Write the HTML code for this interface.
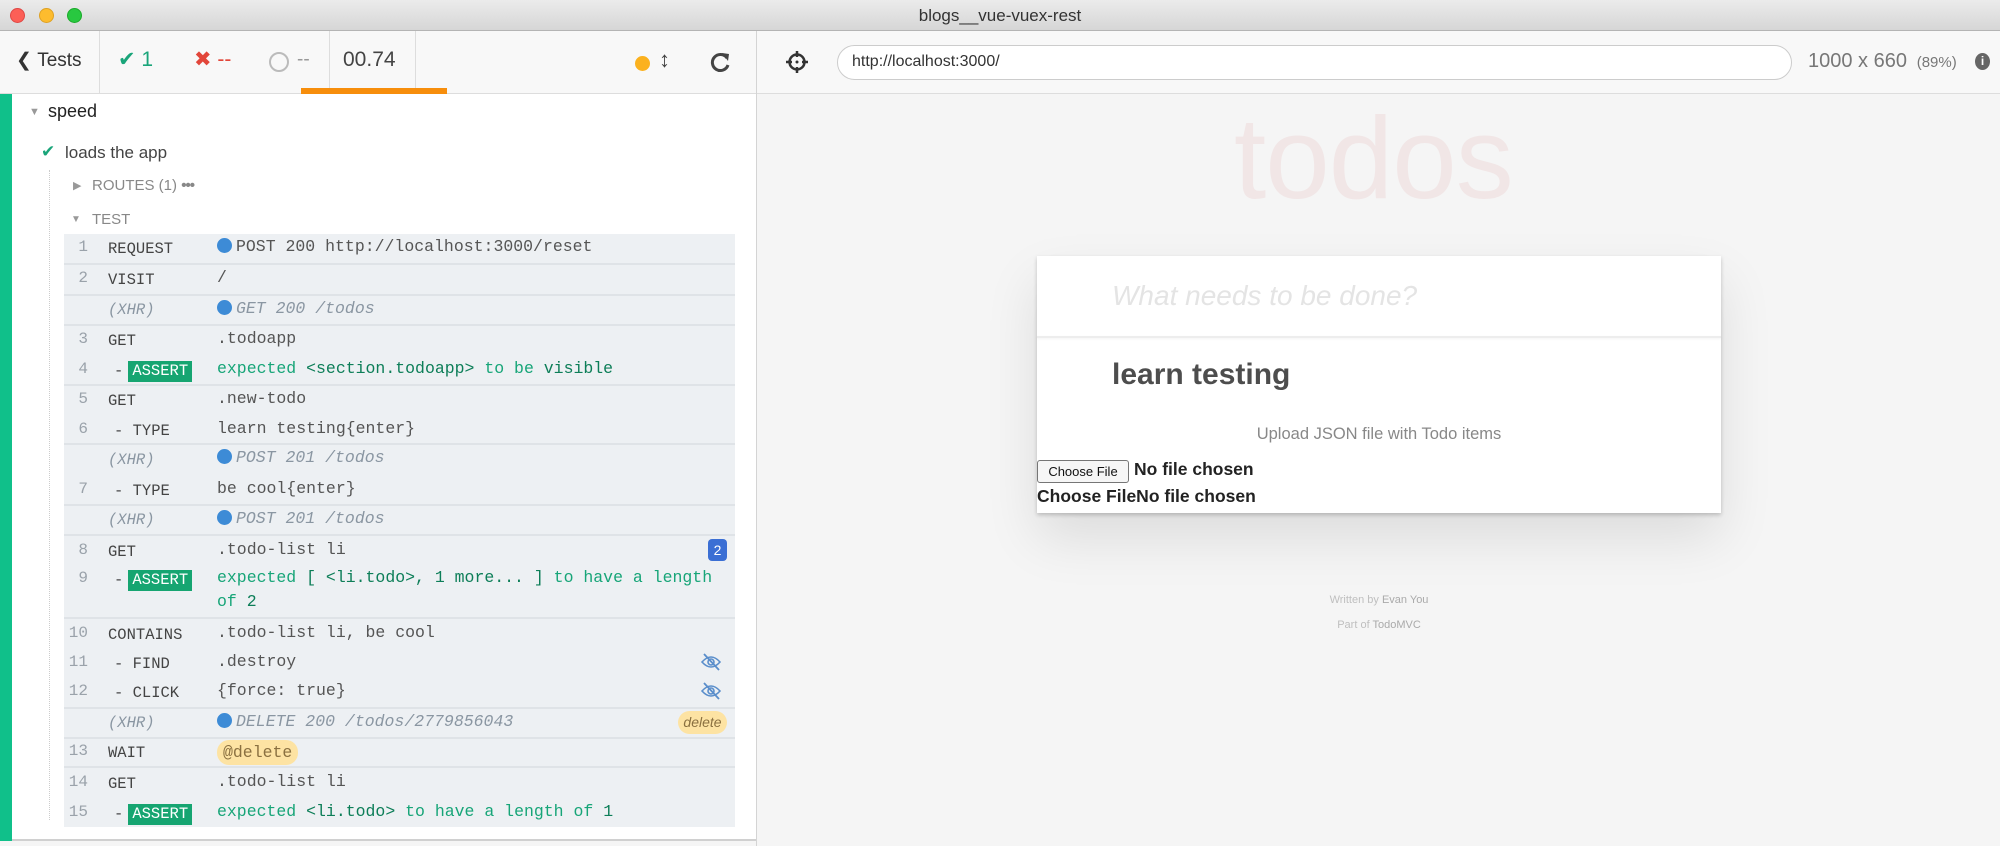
<!DOCTYPE html>
<html><head><meta charset="utf-8">
<style>
*{box-sizing:border-box;margin:0;padding:0}
body{width:2000px;height:846px;overflow:hidden;background:#f5f5f5;font-family:"Liberation Sans",sans-serif;position:relative}
.a{position:absolute;white-space:nowrap}
.title{left:0;top:0;width:2000px;height:31px;background:linear-gradient(#ebebeb,#d6d6d6);border-bottom:1px solid #b4b4b4;text-align:center;font-size:17px;line-height:31px;color:#333}
.dot{width:15px;height:15px;border-radius:50%;top:8px}
.tb{top:31px;height:63px;background:#f8f8f8;border-bottom:1px solid #ddd}
.sep{width:1px;background:#ddd;top:31px;height:63px}
.left{left:0;top:94px;width:756px;height:747px;background:#fff;border-bottom:2px solid #d0d0d0}
.log{left:64px;top:234px;width:671px;height:593px;background:#edf0f3}
.hl{left:64px;width:671px;height:2px;background:#dfe3e7}
.n{width:30px;text-align:right;left:58px;font-family:"Liberation Mono",monospace;font-size:16px;color:#9aa2aa;line-height:30px}
.c{left:108px;font-family:"Liberation Mono",monospace;font-size:15.5px;color:#444;line-height:30px}
.m{left:217px;font-family:"Liberation Mono",monospace;font-size:16.5px;color:#555;line-height:30px}
.x{color:#8a96a2;font-style:italic}
.g{color:#17a578}
.gb{color:#0d7e58}
.bd{display:inline-block;width:15px;height:15px;border-radius:50%;background:#3d8bd6;vertical-align:-2px;margin-right:4px}
.as{display:inline-block;background:#16a571;color:#fff;padding:0 4px;line-height:21px;margin-left:5px}
</style></head><body>
<div class="a title">blogs__vue-vuex-rest</div>
<div class="a dot" style="left:10px;background:#fc5f57;border:1px solid #df4744"></div>
<div class="a dot" style="left:39px;background:#fdbc2e;border:1px solid #dea123"></div>
<div class="a dot" style="left:67px;background:#28c840;border:1px solid #1aab29"></div>

<div class="a tb" style="left:0;width:756px"></div>
<div class="a tb" style="left:757px;width:1243px"></div>
<div class="a" style="left:756px;top:31px;width:1px;height:815px;background:#d4d4d4"></div>
<div class="a sep" style="left:99px"></div>
<div class="a sep" style="left:329px"></div>
<div class="a sep" style="left:415px"></div>
<div class="a" style="left:16px;top:49px;font-size:19px;color:#333">&#10094;&nbsp;Tests</div>
<div class="a" style="left:118px;top:47px;font-size:21px;color:#1aa57a">&#10004;&nbsp;1</div>
<div class="a" style="left:194px;top:47px;font-size:21px;color:#e2463a">&#10006;&nbsp;--</div>
<div class="a" style="left:269px;top:52px;width:20px;height:20px;border:2.5px solid #bbb;border-radius:50%"></div>
<div class="a" style="left:297px;top:49px;font-size:19px;color:#999">--</div>
<div class="a" style="left:343px;top:48px;font-size:21px;color:#444">00.74</div>
<div class="a" style="left:301px;top:88px;width:146px;height:7px;background:#f78e0c"></div>
<div class="a" style="left:635px;top:56px;width:15px;height:15px;border-radius:50%;background:#fbb11e"></div>
<div class="a" style="left:659px;top:47px;font-size:22px;color:#444;font-weight:bold">&#8597;</div>
<svg class="a" style="left:710px;top:51px" width="22" height="22" viewBox="0 0 22 22"><path d="M17 7 A8 8 0 1 0 18 14" fill="none" stroke="#444" stroke-width="3"/><path d="M12 2 L19 3 L18 10 Z" fill="#444"/></svg>
<svg class="a" style="left:785px;top:50px" width="24" height="24" viewBox="0 0 24 24"><circle cx="12" cy="12" r="7.5" fill="none" stroke="#333" stroke-width="2.5"/><path d="M12 1v6M12 17v6M1 12h6M17 12h6" stroke="#333" stroke-width="2.5"/><circle cx="12" cy="12" r="1.5" fill="#333"/></svg>
<div class="a" style="left:837px;top:45px;width:955px;height:35px;border:1.5px solid #ccc;border-radius:18px;background:#fff;font-size:16px;line-height:32px;padding-left:14px;color:#333">http://localhost:3000/</div>
<div class="a" style="left:1808px;top:50px;font-size:20px;color:#777">1000 x 660 <span style="font-size:15px">&nbsp;(89%)</span></div>
<div class="a" style="left:1975px;top:53px;width:15px;height:17px;border-radius:50%;background:#666;color:#fff;font-size:12px;text-align:center;line-height:17px;font-weight:bold">i</div>

<div class="a left"></div>
<div class="a" style="left:0;top:94px;width:12px;height:747px;background:#10c08a"></div>
<div class="a" style="left:29px;top:106px;font-size:11px;color:#999">&#9660;</div>
<div class="a" style="left:48px;top:101px;font-size:18px;color:#222">speed</div>
<div class="a" style="left:41px;top:142px;font-size:17px;color:#1aa57a">&#10004;</div>
<div class="a" style="left:65px;top:143px;font-size:17px;color:#444">loads the app</div>
<div class="a" style="left:49px;top:170px;width:0;height:650px;border-left:1px dotted #ccc"></div>
<div class="a" style="left:73px;top:179px;font-size:11px;color:#999">&#9654;</div>
<div class="a" style="left:92px;top:177px;font-size:15px;color:#888">ROUTES (1) <b style="letter-spacing:-1px">&bull;&bull;&bull;</b></div>
<div class="a" style="left:71px;top:214px;font-size:10px;color:#999">&#9660;</div>
<div class="a" style="left:92px;top:211px;font-size:15px;color:#888">TEST</div>

<div class="a log"></div>
<div class="a hl" style="top:263px"></div>
<div class="a hl" style="top:294px"></div>
<div class="a hl" style="top:324px"></div>
<div class="a hl" style="top:384px"></div>
<div class="a hl" style="top:443px"></div>
<div class="a hl" style="top:504px"></div>
<div class="a hl" style="top:534px"></div>
<div class="a hl" style="top:617px"></div>
<div class="a hl" style="top:707px"></div>
<div class="a hl" style="top:737px"></div>
<div class="a hl" style="top:766px"></div>

<div class="a n" style="top:232px">1</div><div class="a c" style="top:234px">REQUEST</div><div class="a m" style="top:232px"><span class="bd"></span>POST 200 http://localhost:3000/reset</div>
<div class="a n" style="top:263px">2</div><div class="a c" style="top:265px">VISIT</div><div class="a m" style="top:263px">/</div>
<div class="a c x" style="top:295px">(XHR)</div><div class="a m x" style="top:294px"><span class="bd"></span>GET 200 /todos</div>
<div class="a n" style="top:324px">3</div><div class="a c" style="top:326px">GET</div><div class="a m" style="top:324px">.todoapp</div>
<div class="a n" style="top:354px">4</div><div class="a c" style="top:356px;left:114px">-<span class="as">ASSERT</span></div><div class="a m g" style="top:354px">expected <span class="gb">&lt;section.todoapp&gt;</span> to be <span class="gb">visible</span></div>
<div class="a n" style="top:384px">5</div><div class="a c" style="top:386px">GET</div><div class="a m" style="top:384px">.new-todo</div>
<div class="a n" style="top:414px">6</div><div class="a c" style="top:416px;left:114px">- TYPE</div><div class="a m" style="top:414px">learn testing{enter}</div>
<div class="a c x" style="top:445px">(XHR)</div><div class="a m x" style="top:443px"><span class="bd"></span>POST 201 /todos</div>
<div class="a n" style="top:474px">7</div><div class="a c" style="top:476px;left:114px">- TYPE</div><div class="a m" style="top:474px">be cool{enter}</div>
<div class="a c x" style="top:505px">(XHR)</div><div class="a m x" style="top:504px"><span class="bd"></span>POST 201 /todos</div>
<div class="a n" style="top:535px">8</div><div class="a c" style="top:537px">GET</div><div class="a m" style="top:535px">.todo-list li</div>
<div class="a" style="left:708px;top:539px;width:19px;height:22px;border-radius:4px;background:#3b6fd4;color:#fff;font-size:14px;text-align:center;line-height:22px">2</div>
<div class="a n" style="top:563px">9</div><div class="a c" style="top:565px;left:114px">-<span class="as">ASSERT</span></div><div class="a m g" style="top:563px">expected <span class="gb">[ &lt;li.todo&gt;, 1 more... ]</span> to have a length</div>
<div class="a m g" style="top:587px">of <span class="gb">2</span></div>
<div class="a n" style="top:618px">10</div><div class="a c" style="top:620px">CONTAINS</div><div class="a m" style="top:618px">.todo-list li, be cool</div>
<div class="a n" style="top:647px">11</div><div class="a c" style="top:649px;left:114px">- FIND</div><div class="a m" style="top:647px">.destroy</div>
<div class="a n" style="top:676px">12</div><div class="a c" style="top:678px;left:114px">- CLICK</div><div class="a m" style="top:676px">{force: true}</div>
<svg class="a" style="left:700px;top:652px" width="22" height="20" viewBox="0 0 22 20"><path d="M2 10 Q11 0 20 10 Q11 20 2 10Z" fill="none" stroke="#5a8ecb" stroke-width="1.6"/><circle cx="11" cy="10" r="3" fill="none" stroke="#5a8ecb" stroke-width="1.6"/><path d="M4 2 L19 18" stroke="#5a8ecb" stroke-width="1.8"/></svg>
<svg class="a" style="left:700px;top:681px" width="22" height="20" viewBox="0 0 22 20"><path d="M2 10 Q11 0 20 10 Q11 20 2 10Z" fill="none" stroke="#5a8ecb" stroke-width="1.6"/><circle cx="11" cy="10" r="3" fill="none" stroke="#5a8ecb" stroke-width="1.6"/><path d="M4 2 L19 18" stroke="#5a8ecb" stroke-width="1.8"/></svg>
<div class="a c x" style="top:708px">(XHR)</div><div class="a m x" style="top:707px"><span class="bd"></span>DELETE 200 /todos/2779856043</div>
<div class="a" style="left:678px;top:711px;width:49px;height:23px;border-radius:12px;background:#fde3a3;color:#8a7040;font-size:14px;font-style:italic;text-align:center;line-height:23px">delete</div>
<div class="a n" style="top:736px">13</div><div class="a c" style="top:738px">WAIT</div>
<div class="a m" style="top:737px;left:217px;background:#fde3a3;border-radius:12px;padding:0 6px;line-height:25px;margin-top:3px;color:#8a7040">@delete</div>
<div class="a n" style="top:767px">14</div><div class="a c" style="top:769px">GET</div><div class="a m" style="top:767px">.todo-list li</div>
<div class="a n" style="top:797px">15</div><div class="a c" style="top:799px;left:114px">-<span class="as">ASSERT</span></div><div class="a m g" style="top:797px">expected <span class="gb">&lt;li.todo&gt;</span> to have a length of <span class="gb">1</span></div>

<div class="a" style="left:1234px;top:88px;font-size:116px;color:#f1e6e6;font-weight:100;line-height:140px;letter-spacing:-1px">todos</div>
<div class="a" style="left:1037px;top:256px;width:684px;height:257px;background:#fff;box-shadow:0 2px 4px rgba(0,0,0,.2),0 25px 50px rgba(0,0,0,.1)"></div>
<div class="a" style="left:1037px;top:336px;width:684px;height:2px;background:#ededed;box-shadow:0 1px 2px rgba(0,0,0,.05)"></div>
<div class="a" style="left:1112px;top:280px;font-size:28px;font-style:italic;color:#e4e4e4">What needs to be done?</div>
<div class="a" style="left:1112px;top:358px;font-size:30px;font-weight:bold;color:#4d4d4d">learn testing</div>
<div class="a" style="left:1037px;width:684px;top:425px;text-align:center;font-size:16.5px;color:#888">Upload JSON file with Todo items</div>
<div class="a" style="left:1037px;top:460px;width:92px;height:23px;border:1px solid #767676;border-radius:3px;background:#f6f6f6;font-size:13px;text-align:center;line-height:21px;color:#111">Choose File</div>
<div class="a" style="left:1134px;top:459px;font-size:17.5px;font-weight:bold;color:#222">No file chosen</div>
<div class="a" style="left:1037px;top:486px;font-size:17.5px;font-weight:bold;color:#222">Choose FileNo file chosen</div>
<div class="a" style="left:1037px;width:684px;top:594px;text-align:center;font-size:11px;color:#bfbfbf">Written by <span style="color:#aaa">Evan You</span></div>
<div class="a" style="left:1037px;width:684px;top:619px;text-align:center;font-size:11px;color:#bfbfbf">Part of <span style="color:#aaa">TodoMVC</span></div>
</body></html>
